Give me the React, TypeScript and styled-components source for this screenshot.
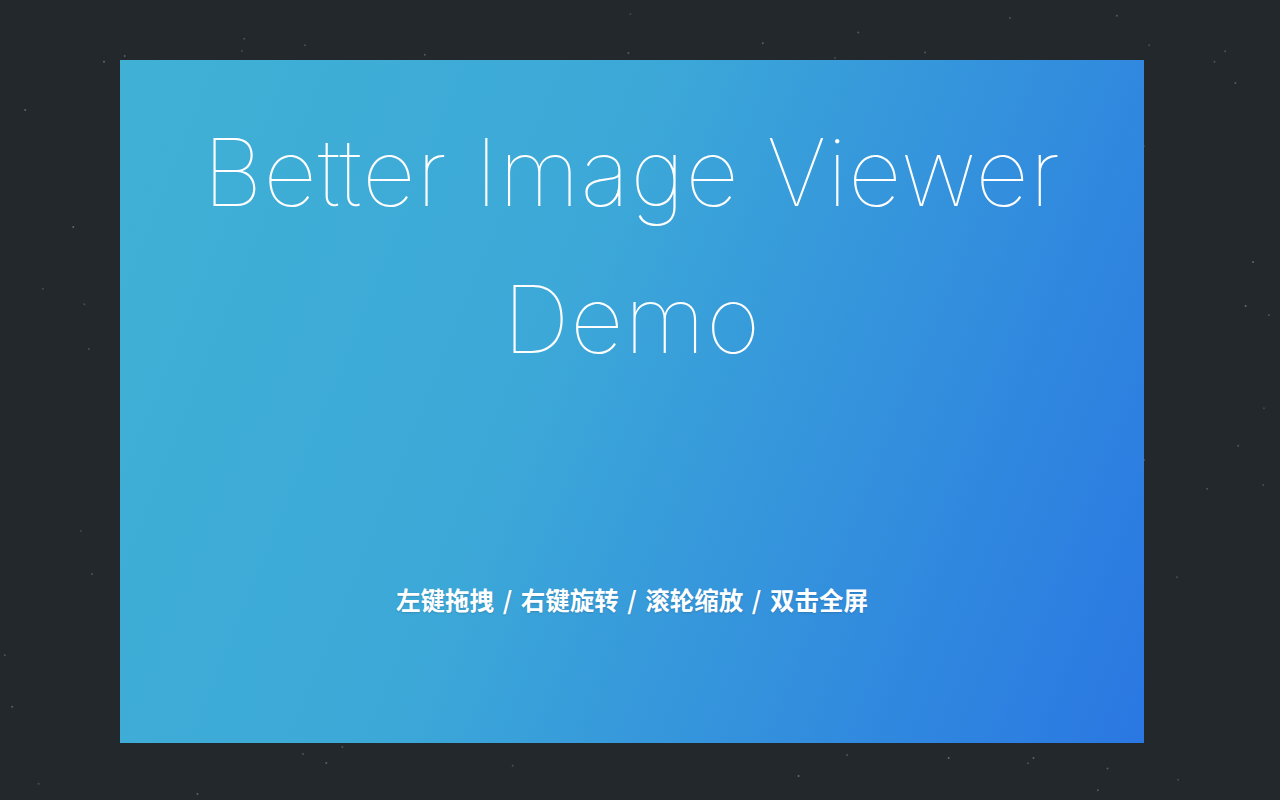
import React from 'react';
import styled, { createGlobalStyle } from 'styled-components';

const GlobalStyle = createGlobalStyle`
  html, body {
    margin: 0;
    padding: 0;
    background: #23282c;
    overflow: hidden;
  }
`;

const Page = styled.div`
  position: relative;
  width: 1280px;
  height: 800px;
  padding: 60px 0 0 120px;
  box-sizing: border-box;
`;

const StarField = styled.svg`
  position: absolute;
  inset: 0;
  pointer-events: none;
`;

const Card = styled.div`
  position: relative;
  width: 1024px;
  height: 683px;
  background: linear-gradient(112deg, #40b1d5 0%, #3ca8d8 42%, #2a77e2 100%);
  display: flex;
  flex-direction: column;
  align-items: center;
  box-sizing: border-box;
  padding-top: 39px;
`;

const Title = styled.h1`
  margin: 0;
  font-family: Inter, 'Liberation Sans', sans-serif;
  font-weight: 100;
  font-size: 93px;
  line-height: 147px;
  color: #fff;
  text-align: center;
  letter-spacing: 1px;
`;

const Hint = styled.p`
  margin: 189px 0 0;
  font-family: 'Noto Sans CJK SC', sans-serif;
  font-weight: 700;
  font-size: 24.5px;
  word-spacing: 3px;
  color: #fff;
  text-shadow: 0 1px 2px rgba(0, 0, 0, 0.15);
`;

function rand(seed: number) {
  let s = seed;
  return () => {
    s = (s * 9301 + 49297) % 233280;
    return s / 233280;
  };
}

const r = rand(42);
const stars = Array.from({ length: 170 }, () => ({
  x: r() * 1280,
  y: r() * 800,
  o: 0.3 + r() * 0.35,
}));

export default function App() {
  return (
    <>
      <GlobalStyle />
      <Page>
        <StarField width="1280" height="800">
          {stars.map((s, i) => (
            <circle key={i} cx={s.x} cy={s.y} r={1} fill="#8a9096" opacity={s.o} />
          ))}
        </StarField>
        <Card>
          <Title>
            Better Image Viewer
            <br />
            Demo
          </Title>
          <Hint>左键拖拽 / 右键旋转 / 滚轮缩放 / 双击全屏</Hint>
        </Card>
      </Page>
    </>
  );
}
